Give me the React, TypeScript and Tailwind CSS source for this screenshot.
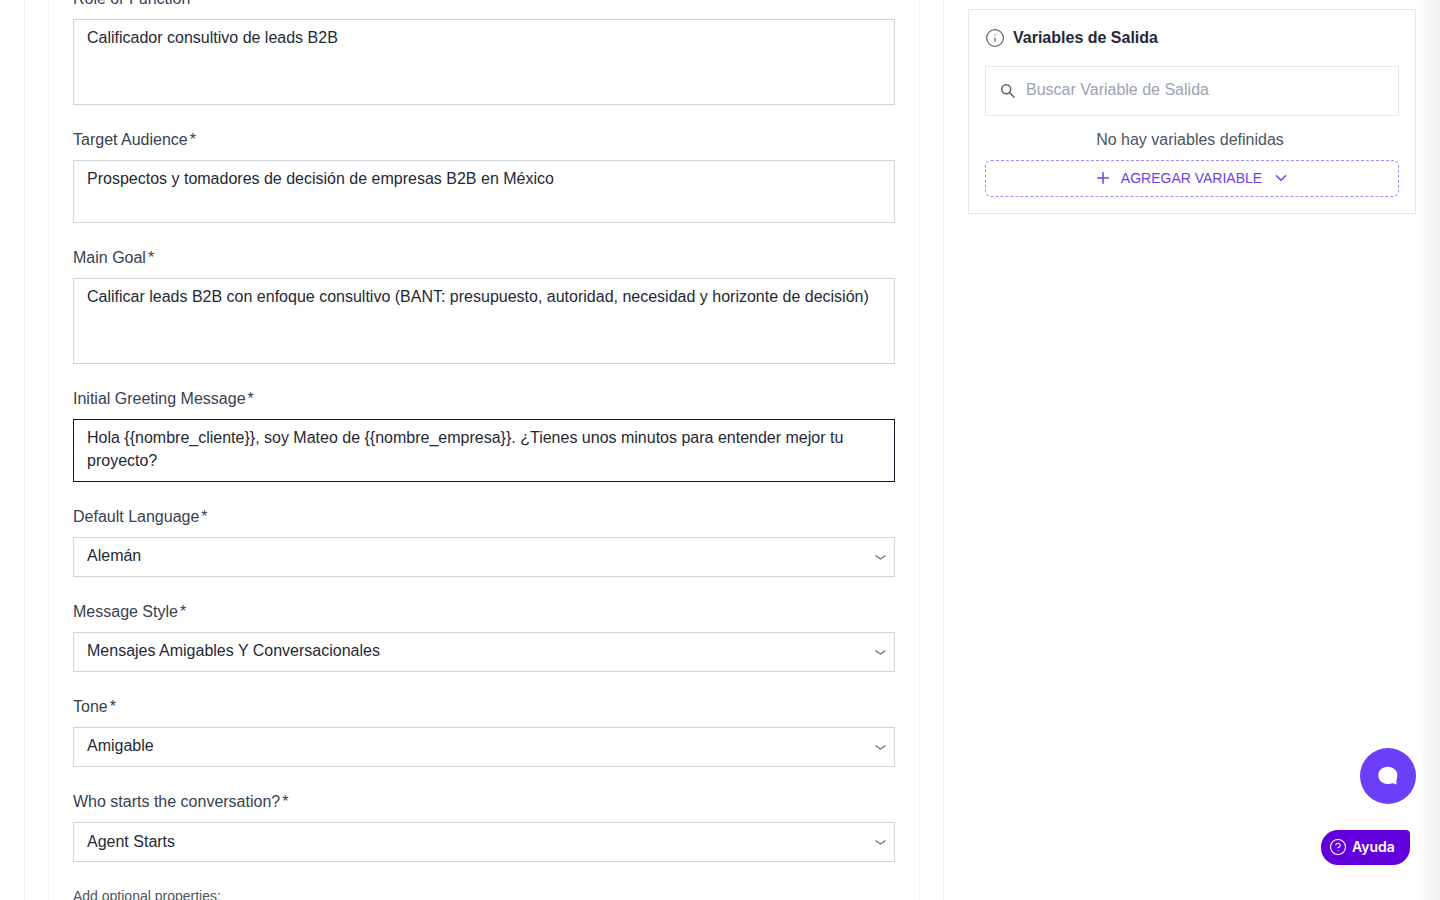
import React from 'react';
import { ChevronDown, CircleHelp, Info, Plus } from 'lucide-react';

const SANS = "font-['Liberation_Sans',Arial,sans-serif]";

const Label = ({ text }: { text: string }) => (
  <label className="mb-2 block h-6 text-base leading-6 text-[#374151]">
    {text}
    <span className="ml-[2px]">*</span>
  </label>
);

const TextField = ({ label, value, height, focused }: { label: string; value: string; height: string; focused?: boolean }) => (
  <div className="mb-[23px]">
    <Label text={label} />
    <textarea
      readOnly
      value={value}
      className={`block w-full resize-none border bg-white px-[13px] pt-[6px] pb-2 text-base leading-[23px] text-[#1f2937] outline-none ${height} ${
        focused ? 'border-[#111827]' : 'border-[#d1d5db]'
      }`}
    />
  </div>
);

const SelectField = ({ label, value, textClass = '-mt-[2px]' }: { label: string; value: string; textClass?: string }) => (
  <div className="mb-[23px]">
    <Label text={label} />
    <div className="flex h-10 w-full items-center justify-between border border-[#d1d5db] bg-white pr-[8px] pl-[13px] text-base text-[#1f2937]">
      <span className={textClass}>{value}</span>
      <svg width="11" height="5" viewBox="0 0 11 5" fill="none">
        <path d="M0.500 0.500 L5.500 4 L10.500 0.500" stroke="#6b7280" strokeWidth="1.300" />
      </svg>
    </div>
  </div>
);

const App = () => {
  return (
    <div className={`relative flex h-screen overflow-hidden bg-white ${SANS}`}>
      <div className="ml-6 h-full w-[920px] shrink-0 border-x border-[#eceef1] px-[23px]">
        <div className="flow-root h-full border-x border-[#f5f6f7] px-6">
          <div className="-mt-[13px]">
            <TextField label="Role or Function" value="Calificador consultivo de leads B2B" height="h-[86px]" />
            <TextField label="Target Audience" value="Prospectos y tomadores de decisión de empresas B2B en México" height="h-[63px]" />
            <TextField
              label="Main Goal"
              value="Calificar leads B2B con enfoque consultivo (BANT: presupuesto, autoridad, necesidad y horizonte de decisión)"
              height="h-[86px]"
            />
            <TextField
              label="Initial Greeting Message"
              value="Hola {{nombre_cliente}}, soy Mateo de {{nombre_empresa}}. ¿Tienes unos minutos para entender mejor tu proyecto?"
              height="h-[63px]"
              focused
            />
            <SelectField label="Default Language" value="Alemán" />
            <SelectField label="Message Style" value="Mensajes Amigables Y Conversacionales" />
            <SelectField label="Tone" value="Amigable" />
            <SelectField label="Who starts the conversation?" value="Agent Starts" textClass="-mt-[1px]" />
            <p className="mt-[24px] text-sm text-[#4b5563]">Add optional properties:</p>
          </div>
        </div>
      </div>

      <div className="ml-6 w-[448px] shrink-0 pt-[9px]">
        <div className="h-[205px] border border-[#e5e7eb] bg-white px-4">
          <div className="flex h-[56px] items-center">
            <Info size={20} strokeWidth={1.500} className="text-[#5f6672]" />
            <h3 className="ml-[8px] text-base font-bold text-[#1f2937]">Variables de Salida</h3>
          </div>
          <div className="flex h-[50px] items-center border border-[#e5e7eb] pl-[14px]">
            <svg width="16" height="16" viewBox="0 0 16 16" fill="none" className="-mt-[1px] shrink-0">
              <circle cx="6.200" cy="6.200" r="4.500" stroke="#5f6672" strokeWidth="1.600" />
              <path d="M9.500 9.500L14.500 14.500" stroke="#5f6672" strokeWidth="1.600" />
            </svg>
            <input
              readOnly
              placeholder="Buscar Variable de Salida"
              className="-mt-[2px] ml-[10px] w-full bg-transparent text-base text-[#4b5563] outline-none placeholder:text-[#9ca3af]"
            />
          </div>
          <p className="mt-[12px] h-6 pr-[4px] text-center text-base leading-6 text-[#4b5563]">No hay variables definidas</p>
          <button className="mt-[8px] flex h-[37px] w-full items-center justify-center rounded-md border border-dashed border-[#a78bfa] pb-[1px] text-sm text-[#6d3fe8]">
            <Plus size={18} strokeWidth={2} className="mr-[9px]" />
            AGREGAR VARIABLE
            <ChevronDown size={18} strokeWidth={2} className="ml-[10px]" />
          </button>
        </div>
      </div>

      {/* right edge shadow of the drawer */}
      <div className="pointer-events-none absolute top-0 right-0 h-full w-6 bg-gradient-to-r from-transparent to-[#f1f1f1]" />

      <button className="absolute top-[748px] left-[1360px] flex h-14 w-14 items-center justify-center rounded-full bg-[#6a3ff7]">
        <svg width="22" height="22" viewBox="0 0 20 20">
          <path d="M9.800 1.500C14.800 1.500 18.500 4.800 18.500 9C18.500 11.200 17.800 13 17.600 15L18 17.800L14.200 16.500C12.800 17 11.300 17.200 9.800 17.200C4.800 17.200 1.200 13.800 1.200 9.300C1.200 4.800 4.800 1.500 9.800 1.500Z" fill="#fff" />
        </svg>
      </button>

      <button className="absolute top-[830px] left-[1321px] flex h-[35px] w-[89px] items-center rounded-[17px] rounded-tr-[4px] bg-[#6200dc] pb-[1px] pl-[8px] font-['Inter',sans-serif] text-sm font-semibold text-white">
        <CircleHelp size={18} strokeWidth={1.500} />
        <span className="ml-[5px]">Ayuda</span>
      </button>
    </div>
  );
};

export default App;
